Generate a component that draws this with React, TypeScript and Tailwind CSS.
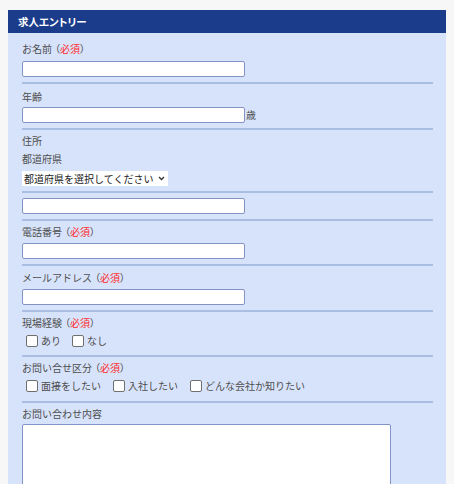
const Req = () => <span className="text-[#ff2a2a]">必須</span>;

interface LabelProps {
  text: string;
  required?: boolean;
}

const Label = ({ text, required }: LabelProps) => (
  <div className="leading-[14px]">
    {text}
    {required && (
      <>
        <span className="ml-[3px] [font-feature-settings:'palt']">（</span>
        <Req />
        <span className="[font-feature-settings:'palt']">）</span>
      </>
    )}
  </div>
);

const TextInput = ({ className = 'w-[223px]' }: { className?: string }) => (
  <input
    type="text"
    className={`block h-[16px] rounded-[2px] border border-[#8393c6] bg-white outline-none ${className}`}
  />
);

const Check = ({ label }: { label: string }) => (
  <label className="flex items-center gap-[3px]">
    <span className="block h-[12px] w-[12px] rounded-[2px] border border-[#6f6f6f] bg-white" />
    <span className="leading-[14px]">{label}</span>
  </label>
);

const Row = ({ className, children }: { className: string; children: React.ReactNode }) => (
  <div className={`border-b-2 border-[#aabde2] ${className}`}>{children}</div>
);

export default function App() {
  return (
    <div className="h-[484px] overflow-hidden bg-[#f7f7f7] pt-[10px] px-[8px] font-['Noto_Sans_CJK_JP','Noto_Sans',sans-serif] text-[10px] text-[#4d4d4d]">
      <div className="bg-[#d7e3fb] pb-[40px]">
        <div className="flex h-[23px] items-center bg-[#1b3c8b] pl-[10px] text-[10.5px] font-bold text-white [font-feature-settings:'palt']">
          求人エントリー
        </div>
        <div className="pl-[14px] pr-[13px]">
          <Row className="pt-[9px] pb-[5px]">
            <Label text="お名前" required />
            <div className="mt-[5px]">
              <TextInput />
            </div>
          </Row>
          <Row className="pt-[6px] pb-[5px]">
            <Label text="年齢" />
            <div className="mt-[3px] flex items-center">
              <TextInput />
              <span className="ml-[1px] leading-[14px]">歳</span>
            </div>
          </Row>
          <Row className="pt-[4px] pb-[5px]">
            <Label text="住所" />
            <div className="mt-[4px]">
              <Label text="都道府県" />
            </div>
            <div className="mt-[5px] flex h-[15px] w-[146px] items-center bg-white pl-[2px] text-[#222]">
              <span className="leading-[14px]">都道府県を選択してください</span>
              <svg width="7" height="5" viewBox="0 0 7 5" className="ml-auto mr-[3px]">
                <path d="M1 1 L3.5 3.5 L6 1" fill="none" stroke="#333" strokeWidth="1.3" />
              </svg>
            </div>
          </Row>
          <Row className="pt-[5px] pb-[5px]">
            <TextInput />
          </Row>
          <Row className="pt-[4px] pb-[5px]">
            <Label text="電話番号" required />
            <div className="mt-[4px]">
              <TextInput />
            </div>
          </Row>
          <Row className="pt-[5px] pb-[5px]">
            <Label text="メールアドレス" required />
            <div className="mt-[4px]">
              <TextInput />
            </div>
          </Row>
          <Row className="pt-[4px] pb-[7px]">
            <Label text="現場経験" required />
            <div className="mt-[4px] flex h-[14px] items-center gap-[11px] pl-[4px]">
              <Check label="あり" />
              <Check label="なし" />
            </div>
          </Row>
          <Row className="pt-[4px] pb-[8px]">
            <Label text="お問い合せ区分" required />
            <div className="mt-[4px] flex h-[14px] items-center gap-[12px] pl-[4px]">
              <Check label="面接をしたい" />
              <Check label="入社したい" />
              <Check label="どんな会社か知りたい" />
            </div>
          </Row>
          <div className="pt-[4px]">
            <Label text="お問い合わせ内容" />
            <textarea className="mt-[3px] block h-[100px] w-[369px] resize-none rounded-[2px] border border-[#8393c6] bg-white outline-none" />
          </div>
        </div>
      </div>
    </div>
  );
}
